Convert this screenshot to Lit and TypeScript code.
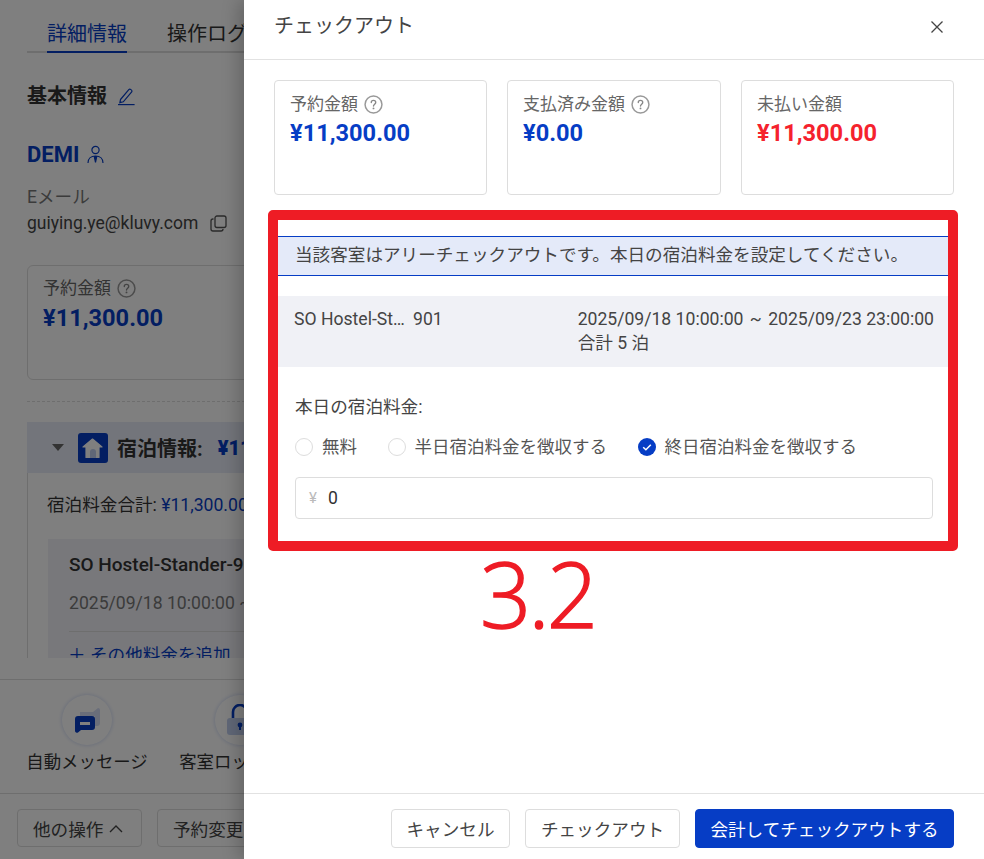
import { LitElement, html, css } from "lit";
import { customElement } from "lit/decorators.js";

const help = html`<svg class="help" viewBox="0 0 18 18" fill="none"><circle cx="9" cy="9" r="8" stroke="#999" stroke-width="1.4"/><path d="M6.9 7.1c0-1.2.9-2 2.1-2s2.1.8 2.1 1.9c0 1.7-2.1 1.7-2.1 3.4" stroke="#888" stroke-width="1.3" stroke-linecap="round"/><circle cx="9" cy="12.7" r=".9" fill="#888"/></svg>`;

@customElement("app-root")
export class AppRoot extends LitElement {
  static styles = css`
    :host { display: block; position: relative; width: 984px; height: 859px; overflow: hidden; background: #fff;
      font-family: Roboto, "Noto Sans CJK JP", sans-serif; color: #333; font-size: 17.6px; }
    * { box-sizing: border-box; }
    .shell { display: flex; height: 859px; }

    /* background page */
    .page { position: relative; width: 244px; flex: none; overflow: hidden; background: #fff; }
    .scrim { position: absolute; inset: 0; background: rgba(0,0,0,.5); }
    .page-inner { width: 540px; height: 859px; display: flex; flex-direction: column; }
    .scroll { height: 658px; overflow: hidden; padding-left: 27px; flex: none; }
    .tabs { display: flex; gap: 40px; height: 53px; border-bottom: 2px solid #ddd; padding-left: 20px; font-size: 20px; }
    .tab { padding-top: 20px; line-height: 28px; height: 53px; white-space: nowrap; }
    .tab.on { color: #063dc5; border-bottom: 2px solid #063dc5; }
    .h2 { display: flex; align-items: center; gap: 10px; margin-top: 29px; font-size: 20px; font-weight: 700; line-height: 28px; }
    .name { display: flex; align-items: center; gap: 8px; margin-top: 31px; font-size: 22px; font-weight: 700; line-height: 28px; color: #063dc5; }
    .muted { margin-top: 16px; line-height: 24px; color: #777; }
    .email { display: flex; align-items: center; gap: 12px; margin-top: 1px; line-height: 26px; color: #444; font-size: 17.5px; }
    .lcard { width: 300px; height: 115px; margin-top: 29px; border: 1px solid #ddd; border-radius: 6px; padding: 10px 15px; }
    .label { display: flex; align-items: center; gap: 6px; line-height: 24px; font-size: 17px; color: #666; white-space: nowrap; }
    .help { width: 19px; height: 19px; flex: none; }
    .amount { font-size: 23.6px; font-weight: 700; line-height: 32px; color: #063dc5; margin-top: 2px; }
    .amount.red { color: #f5222d; }
    .dash { margin-top: 21px; border-top: 1px dashed #ddd; }
    .band { display: flex; align-items: center; height: 51px; margin-top: 20px; padding-left: 25px; background: #e7ebf6; font-size: 20px; font-weight: 700; white-space: nowrap; }
    .caret { width: 0; height: 0; border-left: 6px solid transparent; border-right: 6px solid transparent; border-top: 7px solid #666; margin-right: 14px; }
    .band svg { margin-right: 9px; }
    .band b { color: #063dc5; margin-left: 15px; }
    .stay { border-left: 1px solid #ddd; padding: 20px 0 0 20px; }
    .sum { line-height: 24px; white-space: nowrap; margin-left: -1px; }
    .sum span { color: #063dc5; }
    .stay-card { margin-top: 22px; background: #f0f1f6; padding: 12px 21px; width: 460px; }
    .stay-title { font-size: 19px; font-weight: 500; line-height: 28px; white-space: nowrap; }
    .stay-date { margin-top: 12px; line-height: 24px; color: #777; padding-bottom: 16px; border-bottom: 1px solid #ddd; white-space: nowrap; }
    .add { margin-top: 11px; line-height: 24px; color: #063dc5; white-space: nowrap; margin-left: -1px; }
    .actions { display: flex; gap: 33px; margin-top: 21px; border-top: 1px solid #ddd; padding: 15px 0 19px 27px; }
    .action { display: flex; flex-direction: column; align-items: center; gap: 5px; width: 120px; font-size: 17.4px; line-height: 24px; white-space: nowrap; }
    .circle { width: 50px; height: 50px; border-radius: 50%; background: #fff; box-shadow: 0 0 4px rgba(6,61,197,.22); display: flex; align-items: center; justify-content: center; }
    .page-foot { display: flex; gap: 15px; border-top: 1px solid #ddd; padding: 15px 0 0 17px; }
    .page-foot button { height: 38px; }
    .page-foot .more { width: 125px; }

    button { font: inherit; font-size: 17.6px; color: #444; background: #fff; border: 1px solid #ddd; border-radius: 4px; padding: 0 15px; white-space: nowrap; display: inline-flex; align-items: center; gap: 6px; }
    button.primary { background: #063dc5; border-color: #063dc5; color: #fff; }

    /* drawer */
    .drawer { position: relative; flex: 1; min-width: 0; display: flex; flex-direction: column; background: #fff; box-shadow: -6px 0 16px rgba(0,0,0,.2); }
    .d-head { flex: none; height: 60px; border-bottom: 1px solid #e2e2e2; display: flex; justify-content: space-between; align-items: flex-start; padding: 12px 40px 0 30px; font-size: 20px; line-height: 28px; color: #444; }
    .close { margin-top: 8px; }
    .d-body { flex: 1; padding: 20px 30px 0; min-height: 0; }
    .cards { display: grid; grid-template-columns: 213px 214px 213px; gap: 20px; }
    .card { height: 115px; border: 1px solid #ddd; border-radius: 4px; padding: 11px 15px; }
    .card .amount { margin-top: 1px; }
    .alert { margin-top: 41px; height: 40px; border-top: 1px solid #063dc5; border-bottom: 1px solid #063dc5; background: #e4eaf9; padding-left: 21px; line-height: 37px; color: #444; white-space: nowrap; }
    .room { margin-top: 20px; height: 71px; background: #f0f1f6; display: flex; padding: 11px 20px 0; line-height: 24px; color: #444; white-space: nowrap; }
    .room-name { width: 112px; }
    .room-no { margin-left: 8px; width: 164px; margin-right: 2px; }
    .tilde { margin: 0 2px; }
    .fee { margin-top: 28px; padding-left: 21px; line-height: 24px; color: #444; }
    .radios { display: flex; gap: 30.5px; margin-top: 16px; padding-left: 21px; }
    .radio { display: flex; align-items: center; gap: 9px; line-height: 24px; color: #555; white-space: nowrap; font-size: 17.5px; }
    .dot { width: 18px; height: 18px; border-radius: 50%; border: 1px solid #ddd; background: #fff; flex: none; }
    .input { margin: 18px 0 0 21px; width: 638px; height: 42px; border: 1px solid #ddd; border-radius: 4px; display: flex; align-items: center; gap: 11px; padding-left: 13px; }
    .input i { font-style: normal; color: #bbb; font-size: 15px; }
    .d-foot { flex: none; border-top: 1px solid #e2e2e2; height: 66px; padding: 15px 30px 0 0; display: flex; justify-content: flex-end; gap: 15px; }
    .d-foot button { height: 39px; justify-content: center; padding: 0; }
    .d-foot .cancel { width: 119px; }
    .d-foot .co { width: 155px; }
    .d-foot .primary { width: 259px; }

    /* annotation */
    .mark { position: absolute; left: 268px; top: 210px; width: 690px; height: 341px; border: 10px solid #ee1c25; border-radius: 5px; }
    .mark-num { position: absolute; left: 480px; top: 540px; font-family: "Open Sans", sans-serif; font-weight: 300; font-size: 90px; line-height: 106px; color: #ee1c25; letter-spacing: -3px; -webkit-text-stroke: 1.4px #ee1c25; }
  `;

  private pencil() {
    return html`<svg width="18" height="19" viewBox="0 0 18 19" fill="none" stroke="#063dc5" stroke-width="1.2"><path d="M3.5 12.5 11.8 2.6c.5-.6 1.3-.6 1.9-.2l.8.7c.6.5.6 1.3.2 1.9L6.3 14.8l-3.4.9.6-3.2Z"/><path d="M1 17.6h16.6"/></svg>`;
  }
  private person() {
    return html`<svg width="17" height="20" viewBox="0 0 17 20" fill="none" stroke="#063dc5" stroke-width="1.2"><circle cx="8.5" cy="5" r="3.6"/><path d="M1 18c0-4 2.8-7 7.5-7s7.5 3 7.5 7"/><path d="M7.3 11.5h2.4L8.5 17.5l-1.2-6Z" fill="#063dc5"/></svg>`;
  }
  private copy() {
    return html`<svg width="17" height="17" viewBox="0 0 17 17" fill="none" stroke="#555" stroke-width="1.3"><rect x="5" y="1" width="11" height="11.5" rx="2"/><path d="M3.5 4H3a2 2 0 0 0-2 2v8a2 2 0 0 0 2 2h8a2 2 0 0 0 2-2"/></svg>`;
  }
  private house() {
    return html`<svg width="30" height="30" viewBox="0 0 30 30"><rect width="30" height="30" rx="3" fill="#063dc5"/><path d="M14.5 6 5 14h3v10.5h13V14h3L14.5 6Z" fill="#fff" stroke="#fff" stroke-width="1.2" stroke-linejoin="round"/><path d="M12 25v-6a3 3 0 0 1 6 0v6Z" fill="#c0cfee"/></svg>`;
  }
  private chat() {
    return html`<svg width="25" height="25" viewBox="0 0 25 25"><path d="M5 4h13l5-4a2 2 0 0 1 2 2v13a3 3 0 0 1-3 3h-2V8H5Z" fill="#d4dcf5"/><path d="M3 8h14a3 3 0 0 1 3 3v8a3 3 0 0 1-3 3H6l-3 2.500a2 2 0 0 1-3-1.500V11a3 3 0 0 1 3-3Z" fill="#063dc5"/><rect x="5" y="14" width="10" height="3" fill="#fff"/></svg>`;
  }
  private lock() {
    return html`<svg width="30" height="32" viewBox="0 0 30 32" fill="none"><path d="M8 14V8a7 7 0 0 1 14 0" stroke="#063dc5" stroke-width="2.6"/><rect x="2" y="14" width="26" height="17" rx="3" fill="#c0cfee"/><circle cx="15" cy="21" r="2.4" fill="#063dc5"/><rect x="14" y="21" width="2" height="5" fill="#063dc5"/></svg>`;
  }

  private card(label: string, amount: string, withHelp: boolean, red = false) {
    return html`<div class="card">
      <div class="label">${label}${withHelp ? help : ""}</div>
      <div class="amount ${red ? "red" : ""}">${amount}</div>
    </div>`;
  }

  render() {
    return html`
      <div class="shell">
        <div class="page">
          <div class="page-inner">
            <div class="scroll">
              <div class="tabs"><div class="tab on">詳細情報</div><div class="tab">操作ログ</div></div>
              <div class="h2">基本情報 ${this.pencil()}</div>
              <div class="name">DEMI ${this.person()}</div>
              <div class="muted">Eメール</div>
              <div class="email">guiying.ye@kluvy.com ${this.copy()}</div>
              <div class="lcard">
                <div class="label">予約金額${help}</div>
                <div class="amount">¥11,300.00</div>
              </div>
              <div class="dash"></div>
              <div class="band"><span class="caret"></span>${this.house()}宿泊情報:<b>¥11,300.00</b></div>
              <div class="stay">
                <div class="sum">宿泊料金合計: <span>¥11,300.00</span></div>
                <div class="stay-card">
                  <div class="stay-title">SO Hostel-Stander-901</div>
                  <div class="stay-date">2025/09/18 10:00:00 ~ 2025/09/23 23:00:00</div>
                  <div class="add">＋ その他料金を追加</div>
                </div>
              </div>
            </div>
            <div class="actions">
              <div class="action"><div class="circle">${this.chat()}</div>自動メッセージ</div>
              <div class="action"><div class="circle">${this.lock()}</div>客室ロック解除</div>
            </div>
            <div class="page-foot">
              <button class="more">他の操作 <svg width="14" height="9" viewBox="0 0 14 9" fill="none" stroke="#444" stroke-width="1.4"><path d="M1 8l6-6 6 6"/></svg></button>
              <button>予約変更</button>
            </div>
          </div>
          <div class="scrim"></div>
        </div>
        <div class="drawer">
          <div class="d-head">
            <span>チェックアウト</span>
            <svg class="close" width="14" height="14" viewBox="0 0 14 14" stroke="#444" stroke-width="1.3"><path d="M1.5 1.5l11 11M12.5 1.5l-11 11"/></svg>
          </div>
          <div class="d-body">
            <div class="cards">
              ${this.card("予約金額", "¥11,300.00", true)}
              ${this.card("支払済み金額", "¥0.00", true)}
              ${this.card("未払い金額", "¥11,300.00", false, true)}
            </div>
            <div class="alert">当該客室はアリーチェックアウトです。本日の宿泊料金を設定してください。</div>
            <div class="room">
              <div class="room-name">SO Hostel-St…</div>
              <div class="room-no">901</div>
              <div>2025/09/18 10:00:00 <span class="tilde">~</span> 2025/09/23 23:00:00<br />合計 5 泊</div>
            </div>
            <div class="fee">本日の宿泊料金:</div>
            <div class="radios">
              <label class="radio"><span class="dot"></span>無料</label>
              <label class="radio"><span class="dot"></span>半日宿泊料金を徴収する</label>
              <label class="radio"><svg width="18" height="18" viewBox="0 0 18 18"><circle cx="9" cy="9" r="9" fill="#063dc5"/><path d="M5.2 9.2l2.7 2.6 4.9-5" fill="none" stroke="#fff" stroke-width="1.5"/></svg>終日宿泊料金を徴収する</label>
            </div>
            <div class="input"><i>¥</i><span>0</span></div>
          </div>
          <div class="d-foot">
            <button class="cancel">キャンセル</button>
            <button class="co">チェックアウト</button>
            <button class="primary">会計してチェックアウトする</button>
          </div>
        </div>
      </div>
      <div class="mark"></div>
      <div class="mark-num">3.2</div>
    `;
  }
}
